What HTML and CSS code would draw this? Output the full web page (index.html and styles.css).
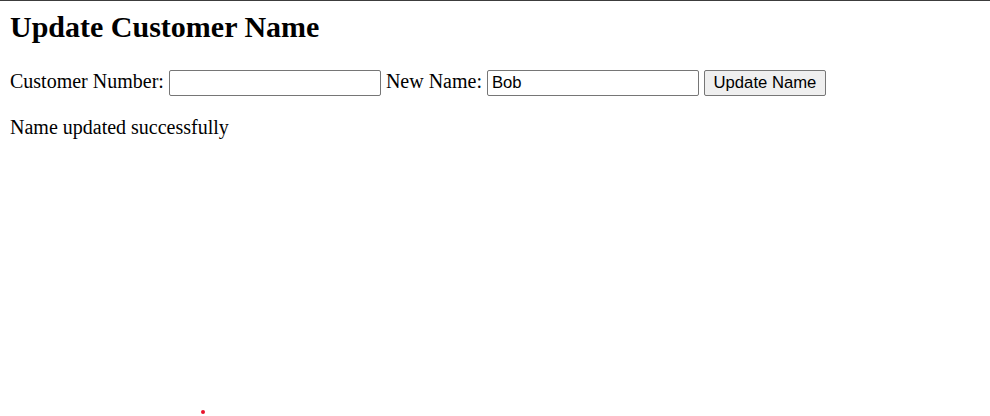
FILE: index.html
```html
<!DOCTYPE html>
<html lang="en">
<head>
<meta charset="utf-8">
<title>Update Customer Name</title>
<link rel="stylesheet" href="styles.css">
</head>
<body>
<h1 class="title">Update Customer Name</h1>
<form class="update-form">
<label>Customer Number: <input type="text" class="field" value=""></label> <label>New Name: <input type="text" class="field" value="Bob"></label> <button type="button" class="btn">Update Name</button>
</form>
<p class="message">Name updated successfully</p>
<span class="dot"></span>
</body>
</html>
```

FILE: styles.css
```css
html {
  border-top: 1px solid #3c3c3c;
  background: #ffffff;
}

body {
  margin: 9px 10px 10px;
  font-family: "Liberation Serif", "Times New Roman", serif;
  font-size: 20px;
  color: #000;
}

.title {
  font-size: 30px;
  font-weight: bold;
  margin: 0 0 26px;
}

.update-form {
  margin: 0;
}

.field {
  box-sizing: border-box;
  width: 212px;
  height: 26px;
  margin: 0;
  padding: 1px 4px;
  border: 1px solid #767676;
  border-radius: 2px;
  font-family: "Liberation Sans", Arial, sans-serif;
  font-size: 16.67px;
  color: #000;
  background: #fff;
}

.btn {
  box-sizing: border-box;
  width: 122px;
  height: 26px;
  margin: 0;
  padding: 1px 7px;
  border: 1px solid #767676;
  border-radius: 2px;
  background: #efefef;
  font-family: "Liberation Sans", Arial, sans-serif;
  font-size: 16.67px;
  color: #000;
}

.message {
  margin: 20px 0 0;
}

.dot {
  position: absolute;
  left: 201px;
  top: 410px;
  width: 4px;
  height: 4px;
  border-radius: 50%;
  background: #e8122c;
}
```
